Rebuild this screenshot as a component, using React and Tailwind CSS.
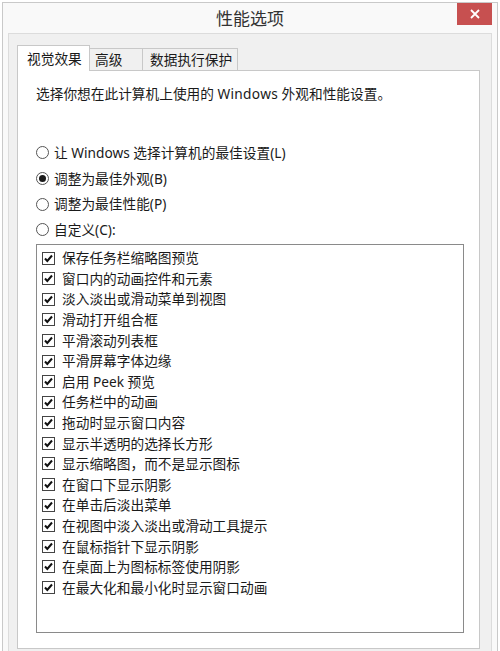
import React from "react";

const radios = [
  { label: "让 Windows 选择计算机的最佳设置(L)", checked: false },
  { label: "调整为最佳外观(B)", checked: true },
  { label: "调整为最佳性能(P)", checked: false },
  { label: "自定义(C):", checked: false },
];

const options = [
  "保存任务栏缩略图预览",
  "窗口内的动画控件和元素",
  "淡入淡出或滑动菜单到视图",
  "滑动打开组合框",
  "平滑滚动列表框",
  "平滑屏幕字体边缘",
  "启用 Peek 预览",
  "任务栏中的动画",
  "拖动时显示窗口内容",
  "显示半透明的选择长方形",
  "显示缩略图，而不是显示图标",
  "在窗口下显示阴影",
  "在单击后淡出菜单",
  "在视图中淡入淡出或滑动工具提示",
  "在鼠标指针下显示阴影",
  "在桌面上为图标标签使用阴影",
  "在最大化和最小化时显示窗口动画",
];

const Radio = ({ checked }) => (
  <span className="w-[13px] h-[13px] rounded-full border border-[#555] bg-white flex items-center justify-center shrink-0">
    {checked && <span className="w-[7px] h-[7px] rounded-full bg-[#1a1a1a]" />}
  </span>
);

const CheckBox = () => (
  <span className="w-[13px] h-[13px] border border-[#444] bg-white flex items-center justify-center shrink-0">
    <svg width="11" height="11" viewBox="0 0 11 11">
      <path d="M2 5.5 L4.3 8 L9 2.5" fill="none" stroke="#111" strokeWidth="2" />
    </svg>
  </span>
);

export default function App() {
  return (
    <div
      className="w-[500px] h-[651px] bg-white overflow-hidden text-[#1a1a1a]"
      style={{ fontFamily: "'Noto Sans', 'Noto Sans CJK SC', sans-serif" }}
    >
      <div className="ml-[2px] mt-[2px] w-[496px] h-[680px] bg-[#f9f9f9] border border-[#c9c9c9]">
        {/* 标题栏 */}
        <div className="relative h-[30px] flex items-center justify-center">
          <span className="text-[17px] leading-none text-[#333] mt-[1px]">性能选项</span>
          <div className="absolute right-[5px] top-0 w-[35px] h-[22px] bg-[#c75050] flex items-center justify-center">
            <svg width="10" height="10" viewBox="0 0 10 10">
              <path d="M1 1 L9 9 M9 1 L1 9" stroke="#fff" strokeWidth="1.8" />
            </svg>
          </div>
        </div>

        {/* 内容区 */}
        <div className="mx-[5px] h-[640px] bg-[#f0f0f0] border border-[#dcdcdc] pl-[8px] pr-[11px] pt-[11px]">
          {/* 选项卡 */}
          <div className="flex items-end text-[13.7px] leading-none relative z-10 -mb-px">
            <div className="w-[73px] h-[26px] bg-white border border-b-0 border-[#c8c8c8] flex items-center pl-[9px]">
              视觉效果
            </div>
            <div className="w-[53px] h-[23px] bg-[#f0f0f0] border border-[#c8c8c8] border-l-0 flex items-center pl-[5px]">
              高级
            </div>
            <div className="w-[95px] h-[23px] bg-[#f0f0f0] border border-[#c8c8c8] border-l-0 flex items-center pl-[7px]">
              数据执行保护
            </div>
          </div>

          {/* 面板 */}
          <div className="h-[579px] bg-white border border-[#c8c8c8] pl-[18px] pt-[14px]">
            <p className="text-[13.7px] leading-[18px]">
              选择你想在此计算机上使用的 <span className="tracking-[0.3px]">Windows</span> 外观和性能设置。
            </p>

            <div className="mt-[37px] flex flex-col">
              {radios.map((r) => (
                <div key={r.label} className="h-[25.7px] flex items-center gap-[5px] text-[13.7px]">
                  <Radio checked={r.checked} />
                  <span className="leading-none">{r.label}</span>
                </div>
              ))}
            </div>

            <div className="mt-[1px] w-[428px] h-[389px] border border-[#8a8a8a] bg-white pt-[3px] pl-[5px]">
              {options.map((o) => (
                <div key={o} className="h-[20.6px] flex items-center gap-[7px] text-[13.7px]">
                  <CheckBox />
                  <span className="leading-none">{o}</span>
                </div>
              ))}
            </div>
          </div>
        </div>
      </div>
    </div>
  );
}
